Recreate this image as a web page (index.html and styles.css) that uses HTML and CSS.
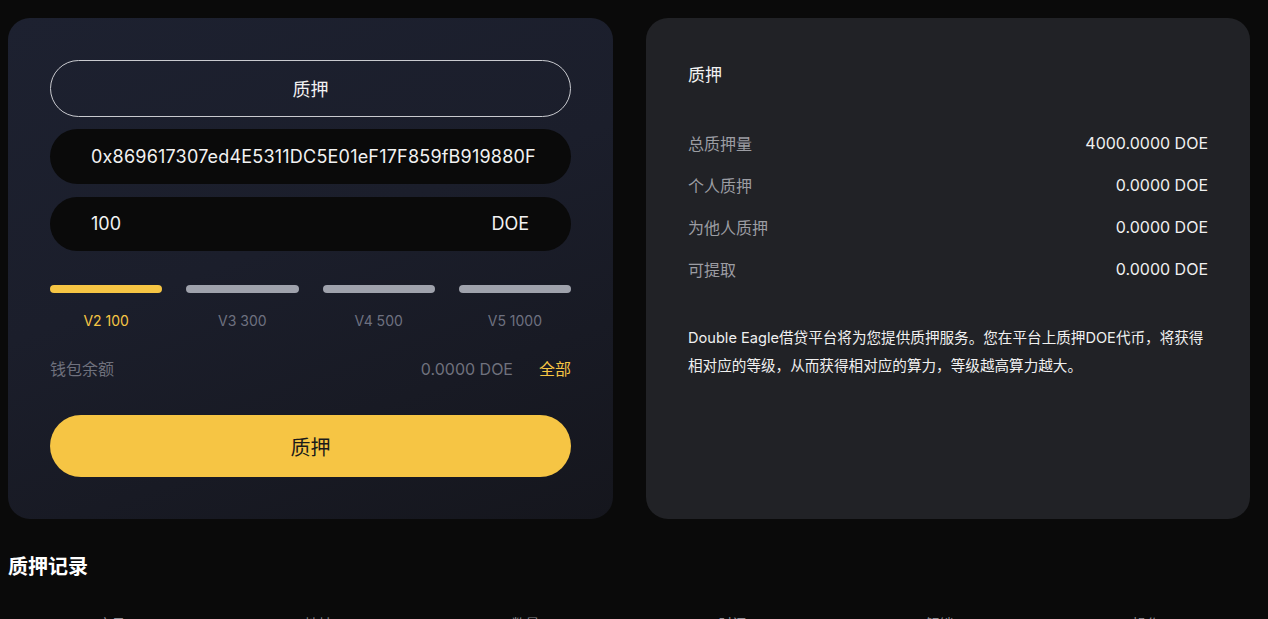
FILE: index.html
```html
<!DOCTYPE html>
<html lang="zh">
<head>
<meta charset="utf-8">
<title>质押</title>
<link rel="stylesheet" href="styles.css">
</head>
<body>
<div class="page">
  <div class="cards">
    <section class="card stake-card">
      <div class="outline-btn">质押</div>
      <div class="field field-address">0x869617307ed4E5311DC5E01eF17F859fB919880F</div>
      <div class="field field-amount"><span>100</span><span>DOE</span></div>
      <div class="levels">
        <div class="level active"><div class="bar"></div><div class="lv-label">V2 100</div></div>
        <div class="level"><div class="bar"></div><div class="lv-label">V3 300</div></div>
        <div class="level"><div class="bar"></div><div class="lv-label">V4 500</div></div>
        <div class="level"><div class="bar"></div><div class="lv-label">V5 1000</div></div>
      </div>
      <div class="wallet-row">
        <span class="wallet-label">钱包余额</span>
        <span class="wallet-right"><span class="wallet-val">0.0000 DOE</span><span class="all">全部</span></span>
      </div>
      <div class="primary-btn">质押</div>
    </section>
    <section class="card info-card">
      <h2 class="info-title">质押</h2>
      <div class="stats">
        <div class="stat"><span class="stat-label">总质押量</span><span class="stat-val">4000.0000 DOE</span></div>
        <div class="stat"><span class="stat-label">个人质押</span><span class="stat-val">0.0000 DOE</span></div>
        <div class="stat"><span class="stat-label">为他人质押</span><span class="stat-val">0.0000 DOE</span></div>
        <div class="stat"><span class="stat-label">可提取</span><span class="stat-val">0.0000 DOE</span></div>
      </div>
      <p class="desc">Double Eagle借贷平台将为您提供质押服务。您在平台上质押DOE代币，将获得相对应的等级，从而获得相对应的算力，等级越高算力越大。</p>
    </section>
  </div>
  <h2 class="records-title">质押记录</h2>
  <div class="table-head">
    <span>序号</span><span>地址</span><span>数量</span><span>时间</span><span>解锁</span><span>操作</span>
  </div>
</div>
</body>
</html>
```

FILE: styles.css
```css
* { box-sizing: border-box; margin: 0; padding: 0; }
html, body { background: #0a0a0a; }
body {
  font-family: Inter, "Noto Sans CJK SC", sans-serif;
  color: #ffffff;
  overflow: hidden;
}
.page {
  width: 1242px;
  margin-left: 8px;
  padding-top: 18px;
}
.cards {
  display: grid;
  grid-template-columns: 605px 604px;
  column-gap: 33px;
}
.card {
  height: 501px;
  border-radius: 22px;
}
.stake-card {
  background: linear-gradient(160deg, #1d2130 0%, #1b1e2b 45%, #15161d 100%);
  padding: 42px;
  display: flex;
  flex-direction: column;
}
.outline-btn {
  height: 57px;
  border: 1.5px solid #c9cacf;
  border-radius: 29px;
  display: flex;
  align-items: center;
  justify-content: center;
  font-size: 18px;
  color: #f2f2f2;
}
.field {
  height: 55px;
  border-radius: 28px;
  background: #0a0a0a;
  display: flex;
  align-items: center;
  padding: 0 41px;
  font-size: 18px;
  color: #f2f2f2;
}
.field-address {
  margin-top: 12px;
  letter-spacing: 0.2px;
}
.field-amount {
  margin-top: 13px;
  justify-content: space-between;
  padding-right: 42px;
}
.levels {
  margin-top: 34px;
  display: flex;
  gap: 24px;
}
.level {
  flex: 1;
  display: flex;
  flex-direction: column;
  align-items: center;
}
.bar {
  width: 100%;
  height: 8px;
  border-radius: 4px;
  background: #9fa2ac;
}
.lv-label {
  margin-top: 18px;
  font-size: 14px;
  line-height: 20px;
  color: #6e7180;
}
.level.active .bar { background: #f6c544; }
.level.active .lv-label { color: #f6c544; }
.wallet-row {
  margin-top: 27px;
  display: flex;
  justify-content: space-between;
  align-items: center;
  font-size: 16px;
  line-height: 22px;
}
.wallet-label { color: #6f717d; }
.wallet-right { display: flex; gap: 26px; }
.wallet-val { color: #6f717d; }
.all { color: #f6c544; }
.primary-btn {
  margin-top: 35px;
  height: 62px;
  border-radius: 31px;
  background: #f6c544;
  color: #1a1a1a;
  font-size: 20px;
  display: flex;
  align-items: center;
  justify-content: center;
}
.info-card {
  background: #212226;
  padding: 45px 42px 0 42px;
}
.info-title {
  font-size: 17px;
  line-height: 24px;
  font-weight: 400;
  color: #f2f2f2;
}
.stats { margin-top: 35px; }
.stat {
  height: 42px;
  display: flex;
  justify-content: space-between;
  align-items: center;
  font-size: 16px;
}
.stat-label { color: #9c9da3; }
.stat-val { color: #f0f0f0; }
.desc {
  margin-top: 34px;
  max-width: 520px;
  font-size: 14.6px;
  line-height: 28px;
  color: #f0f0f0;
}
.records-title {
  margin-top: 34px;
  font-size: 20px;
  line-height: 28px;
  font-weight: 700;
  color: #ffffff;
}
.table-head {
  margin-top: 33px;
  display: grid;
  grid-template-columns: repeat(6, 1fr);
  font-size: 14px;
  line-height: 20px;
  color: #8b8c92;
  text-align: center;
}
```
